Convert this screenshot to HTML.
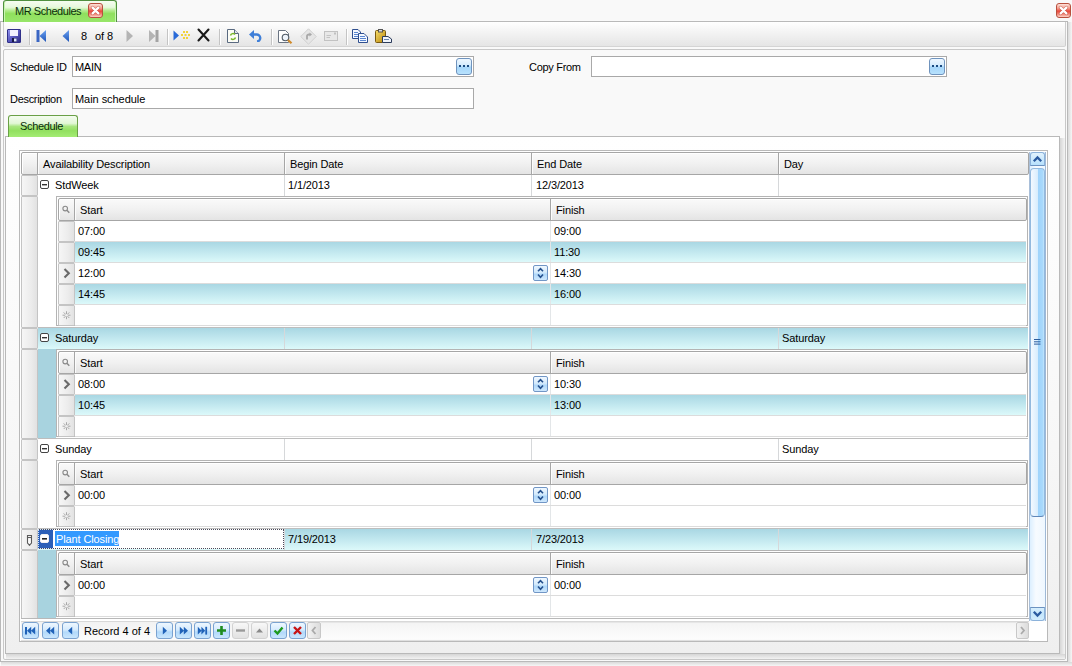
<!DOCTYPE html><html><head><meta charset="utf-8"><style>
html,body{margin:0;padding:0;}
body{width:1072px;height:666px;position:relative;overflow:hidden;background:#f9f9f9;font-family:"Liberation Sans", sans-serif;font-size:11px;}
div{position:absolute;box-sizing:border-box;}
.t{line-height:13px;white-space:nowrap;color:#000;letter-spacing:-0.3px;}
.g{letter-spacing:-0.12px;}
svg{position:absolute;}

</style></head><body>
<div style="left:0px;top:21px;width:1068px;height:641px;border:1px solid #b9b9b9;background:#f9f9f9;"></div>
<div style="left:3px;top:22px;width:1063px;height:25px;border:1px solid #cdcdcd;border-top:none;border-bottom-color:#d4d4d4;border-radius:0 0 2px 2px;background:linear-gradient(#ffffff 0%,#f4f4f4 40%,#e5e5e5 100%);"></div>
<div style="left:3px;top:0px;width:114px;height:22px;border:1px solid #4f8f3f;border-bottom:none;border-radius:3px 3px 0 0;background:linear-gradient(#f6fdf2 0%,#e6f9dc 30%,#b4ec90 45%,#8fe05d 60%,#98e66a 100%);box-shadow:inset 1px 0 0 #c8f5b0,inset -1px 0 0 #c8f5b0;"></div>
<div class="t" style="left:15px;top:5px;color:#0a2e0a;letter-spacing:-0.45px;">MR Schedules</div>
<div style="left:88px;top:3px;width:15px;height:15px;border:1px solid #b8503e;border-radius:3px;background:linear-gradient(#fde4dc 0%,#f59484 35%,#e8483c 55%,#f07c6c 75%,#fcd4c8 100%);"></div>
<svg style="left:88px;top:3px" width="15" height="15" viewBox="0 0 15 15"><path d="M4.6 4.6 L10.4 10.4 M10.4 4.6 L4.6 10.4" stroke="#9a3020" stroke-width="3.4" stroke-linecap="round" opacity="0.45"/><path d="M4.6 4.6 L10.4 10.4 M10.4 4.6 L4.6 10.4" stroke="#fff" stroke-width="2.2" stroke-linecap="round"/></svg>
<div style="left:1056px;top:3px;width:15px;height:15px;border:1px solid #b8503e;border-radius:3px;background:linear-gradient(#fde4dc 0%,#f59484 35%,#e8483c 55%,#f07c6c 75%,#fcd4c8 100%);"></div>
<svg style="left:1056px;top:3px" width="15" height="15" viewBox="0 0 15 15"><path d="M4.6 4.6 L10.4 10.4 M10.4 4.6 L4.6 10.4" stroke="#9a3020" stroke-width="3.4" stroke-linecap="round" opacity="0.45"/><path d="M4.6 4.6 L10.4 10.4 M10.4 4.6 L4.6 10.4" stroke="#fff" stroke-width="2.2" stroke-linecap="round"/></svg>
<div style="left:3px;top:49px;width:1063px;height:611px;border:1px solid #c8c8c8;border-radius:2px;background:#f9f9f9;"></div>
<div style="left:1068px;top:22px;width:4px;height:641px;background:linear-gradient(90deg,#dadada,#f6f6f6);"></div>
<div style="left:1px;top:662px;width:1071px;height:4px;background:linear-gradient(#dadada,#f6f6f6);"></div>
<div class="t" style="left:10px;top:61px;">Schedule ID</div>
<div style="left:72px;top:56px;width:402px;height:21px;border:1px solid #a9a9a9;background:#fff;"></div>
<div class="t" style="left:75px;top:61px;">MAIN</div>
<div style="left:456px;top:58px;width:16px;height:17px;border:1px solid #6f93bd;border-radius:3px;background:linear-gradient(#eef7ff 0%,#d6ecfd 40%,#a6d6fa 55%,#b8e2fd 100%);"></div>
<svg style="left:456px;top:58px" width="16" height="17"><rect x="3" y="7" width="2" height="2" fill="#1a4a80"/><rect x="7" y="7" width="2" height="2" fill="#1a4a80"/><rect x="11" y="7" width="2" height="2" fill="#1a4a80"/></svg>
<div class="t" style="left:10px;top:93px;">Description</div>
<div style="left:72px;top:88px;width:402px;height:21px;border:1px solid #a9a9a9;background:#fff;"></div>
<div class="t" style="left:75px;top:93px;letter-spacing:-0.05px;">Main schedule</div>
<div class="t" style="left:529px;top:61px;">Copy From</div>
<div style="left:591px;top:56px;width:356px;height:21px;border:1px solid #a9a9a9;background:#fff;"></div>
<div style="left:929px;top:58px;width:16px;height:17px;border:1px solid #6f93bd;border-radius:3px;background:linear-gradient(#eef7ff 0%,#d6ecfd 40%,#a6d6fa 55%,#b8e2fd 100%);"></div>
<svg style="left:929px;top:58px" width="16" height="17"><rect x="3" y="7" width="2" height="2" fill="#1a4a80"/><rect x="7" y="7" width="2" height="2" fill="#1a4a80"/><rect x="11" y="7" width="2" height="2" fill="#1a4a80"/></svg>
<div style="left:5px;top:136px;width:1055px;height:518px;border:1px solid #b9b9b9;background:linear-gradient(#ffffff 0%,#f7f7f7 60%,#efefef 100%);"></div>
<div style="left:1060px;top:138px;width:5px;height:516px;background:linear-gradient(90deg,#d6d6d6,#f4f4f4);"></div>
<div style="left:6px;top:654px;width:1059px;height:5px;background:linear-gradient(#d6d6d6,#f2f2f2);"></div>
<div style="left:8px;top:115px;width:70px;height:22px;border:1px solid #6aa046;border-bottom:none;border-radius:3px 3px 0 0;background:linear-gradient(#f4fcef 0%,#e2f7d6 35%,#a8e67f 50%,#92e05f 70%,#a4ec74 100%);"></div>
<div class="t" style="left:20px;top:120px;color:#0a2e0a;letter-spacing:-0.35px;">Schedule</div>
<div style="left:19px;top:150px;width:1029px;height:492px;border:1px solid #b9b9b9;background:#fff;"></div>
<div style="left:21px;top:152px;width:1008px;height:23px;border:1px solid #a6a6a6;border-radius:2px;background:linear-gradient(#fafafa 0%,#f1f1f1 50%,#e4e4e4 100%);box-shadow:inset 1px 1px 0 #fff;"></div>
<div style="left:37px;top:153px;width:1px;height:21px;background:#a6a6a6;"></div>
<div style="left:38px;top:153px;width:1px;height:21px;background:#fcfcfc;"></div>
<div style="left:284px;top:153px;width:1px;height:21px;background:#a6a6a6;"></div>
<div style="left:285px;top:153px;width:1px;height:21px;background:#fcfcfc;"></div>
<div style="left:531px;top:153px;width:1px;height:21px;background:#a6a6a6;"></div>
<div style="left:532px;top:153px;width:1px;height:21px;background:#fcfcfc;"></div>
<div style="left:778px;top:153px;width:1px;height:21px;background:#a6a6a6;"></div>
<div style="left:779px;top:153px;width:1px;height:21px;background:#fcfcfc;"></div>
<div class="t" style="left:43px;top:158px;letter-spacing:-0.12px;">Availability Description</div>
<div class="t" style="left:290px;top:158px;letter-spacing:-0.12px;">Begin Date</div>
<div class="t" style="left:537px;top:158px;letter-spacing:-0.12px;">End Date</div>
<div class="t" style="left:784px;top:158px;letter-spacing:-0.12px;">Day</div>
<div style="left:21px;top:175px;width:17px;height:21px;border:1px solid #c4c4c4;border-radius:1px;background:linear-gradient(90deg,#f6f6f6 0%,#ececec 60%,#e2e2e2 100%);"></div>
<div style="left:38px;top:175px;width:990px;height:21px;background:#fff;"></div>
<div style="left:284px;top:175px;width:1px;height:21px;background:#d6d8da;"></div>
<div style="left:531px;top:175px;width:1px;height:21px;background:#d6d8da;"></div>
<div style="left:778px;top:175px;width:1px;height:21px;background:#d6d8da;"></div>
<svg style="left:40px;top:180px" width="9" height="9"><rect x="0.5" y="0.5" width="8" height="8" rx="1.5" fill="#fff" stroke="#444"/><rect x="2" y="4" width="5" height="1.4" fill="#333"/></svg>
<div class="t" style="left:55px;top:179px;letter-spacing:-0.12px;">StdWeek</div>
<div class="t" style="left:288px;top:179px;letter-spacing:-0.12px;">1/1/2013</div>
<div class="t" style="left:536px;top:179px;letter-spacing:-0.12px;">12/3/2013</div>
<div class="t" style="left:782px;top:179px;letter-spacing:-0.12px;"></div>
<div style="left:21px;top:196px;width:17px;height:132px;border:1px solid #c4c4c4;border-radius:1px;background:linear-gradient(90deg,#f6f6f6 0%,#ececec 60%,#e2e2e2 100%);"></div>
<div style="left:38px;top:327px;width:990px;height:1px;background:#bdbdbd;"></div>
<div style="left:56px;top:196px;width:972px;height:130px;border:1px solid #b4b4b4;background:#fff;"></div>
<div style="left:58px;top:198px;width:969px;height:23px;border:1px solid #a6a6a6;border-radius:2px;background:linear-gradient(#fafafa 0%,#f1f1f1 50%,#e4e4e4 100%);box-shadow:inset 1px 1px 0 #fff;"></div>
<div style="left:74px;top:199px;width:1px;height:21px;background:#a6a6a6;"></div>
<div style="left:75px;top:199px;width:1px;height:21px;background:#fcfcfc;"></div>
<div style="left:550px;top:199px;width:1px;height:21px;background:#a6a6a6;"></div>
<div style="left:551px;top:199px;width:1px;height:21px;background:#fcfcfc;"></div>
<svg style="left:58px;top:198px" width="17" height="22"><circle cx="7.2" cy="10.6" r="2.3" fill="none" stroke="#8a8a8a" stroke-width="1.1"/><path d="M8.9 12.3 L11.3 14.7" stroke="#8a8a8a" stroke-width="1.5"/></svg>
<div class="t" style="left:80px;top:204px;letter-spacing:-0.12px;">Start</div>
<div class="t" style="left:556px;top:204px;letter-spacing:-0.12px;">Finish</div>
<div style="left:58px;top:221px;width:17px;height:21px;border:1px solid #c4c4c4;border-radius:1px;background:linear-gradient(90deg,#f6f6f6 0%,#ececec 60%,#e2e2e2 100%);"></div>
<div style="left:75px;top:221px;width:951px;height:20px;background:#fff;"></div>
<div style="left:550px;top:221px;width:1px;height:20px;background:#e3e6e8;"></div>
<div style="left:75px;top:241px;width:951px;height:1px;background:#dcdcdc;"></div>
<div class="t" style="left:78px;top:225px;letter-spacing:-0.12px;">07:00</div>
<div class="t" style="left:554px;top:225px;letter-spacing:-0.12px;">09:00</div>
<div style="left:58px;top:242px;width:17px;height:21px;border:1px solid #c4c4c4;border-radius:1px;background:linear-gradient(90deg,#f6f6f6 0%,#ececec 60%,#e2e2e2 100%);"></div>
<div style="left:75px;top:242px;width:951px;height:20px;background:linear-gradient(#a9d7e3 0%,#c2e8ef 50%,#dcf9fa 100%);"></div>
<div style="left:550px;top:242px;width:1px;height:20px;background:#e3e6e8;"></div>
<div style="left:75px;top:262px;width:951px;height:1px;background:#dcdcdc;"></div>
<div class="t" style="left:78px;top:246px;letter-spacing:-0.12px;">09:45</div>
<div class="t" style="left:554px;top:246px;letter-spacing:-0.12px;">11:30</div>
<div style="left:58px;top:263px;width:17px;height:21px;border:1px solid #c4c4c4;border-radius:1px;background:linear-gradient(90deg,#f6f6f6 0%,#ececec 60%,#e2e2e2 100%);"></div>
<div style="left:75px;top:263px;width:951px;height:20px;background:#fff;"></div>
<div style="left:550px;top:263px;width:1px;height:20px;background:#e3e6e8;"></div>
<div style="left:75px;top:283px;width:951px;height:1px;background:#dcdcdc;"></div>
<div class="t" style="left:78px;top:267px;letter-spacing:-0.12px;">12:00</div>
<div class="t" style="left:554px;top:267px;letter-spacing:-0.12px;">14:30</div>
<svg style="left:58px;top:263px" width="17" height="21"><path d="M6.5 6 L10.8 10.2 L6.5 14.4" fill="none" stroke="#6a6a6a" stroke-width="2.1"/></svg>
<div style="left:533px;top:265px;width:15px;height:16px;border:1px solid #7196c6;border-radius:2px;background:linear-gradient(#f0f8ff 0%,#d4eafc 45%,#b0d8fa 60%,#cfe8fd 100%);"></div>
<svg style="left:533px;top:265px" width="15" height="16"><path d="M5 6.3 L7.5 3.6 L10 6.3 M5 9.5 L7.5 12.3 L10 9.5" fill="none" stroke="#24508e" stroke-width="1.6"/></svg>
<div style="left:58px;top:284px;width:17px;height:21px;border:1px solid #c4c4c4;border-radius:1px;background:linear-gradient(90deg,#f6f6f6 0%,#ececec 60%,#e2e2e2 100%);"></div>
<div style="left:75px;top:284px;width:951px;height:20px;background:linear-gradient(#a9d7e3 0%,#c2e8ef 50%,#dcf9fa 100%);"></div>
<div style="left:550px;top:284px;width:1px;height:20px;background:#e3e6e8;"></div>
<div style="left:75px;top:304px;width:951px;height:1px;background:#dcdcdc;"></div>
<div class="t" style="left:78px;top:288px;letter-spacing:-0.12px;">14:45</div>
<div class="t" style="left:554px;top:288px;letter-spacing:-0.12px;">16:00</div>
<div style="left:58px;top:305px;width:17px;height:21px;border:1px solid #c4c4c4;border-radius:1px;background:linear-gradient(90deg,#f6f6f6 0%,#ececec 60%,#e2e2e2 100%);"></div>
<div style="left:75px;top:305px;width:951px;height:20px;background:#fff;"></div>
<div style="left:550px;top:305px;width:1px;height:20px;background:#e3e6e8;"></div>
<div style="left:75px;top:325px;width:951px;height:1px;background:#dcdcdc;"></div>
<svg style="left:58px;top:305px" width="17" height="21"><g stroke="#a0a0a0" stroke-width="0.9"><path d="M8.5 6.2 V14.2 M4.5 10.2 H12.5 M5.7 7.4 L11.3 13 M11.3 7.4 L5.7 13"/></g><circle cx="8.5" cy="10.2" r="1.3" fill="#f0f0f0"/></svg>
<div style="left:21px;top:328px;width:17px;height:21px;border:1px solid #c4c4c4;border-radius:1px;background:linear-gradient(90deg,#f6f6f6 0%,#ececec 60%,#e2e2e2 100%);"></div>
<div style="left:38px;top:328px;width:990px;height:21px;background:linear-gradient(#a9d7e3 0%,#c2e8ef 50%,#dcf9fa 100%);"></div>
<div style="left:284px;top:328px;width:1px;height:21px;background:#d6d8da;"></div>
<div style="left:531px;top:328px;width:1px;height:21px;background:#d6d8da;"></div>
<div style="left:778px;top:328px;width:1px;height:21px;background:#d6d8da;"></div>
<svg style="left:40px;top:333px" width="9" height="9"><rect x="0.5" y="0.5" width="8" height="8" rx="1.5" fill="#fff" stroke="#444"/><rect x="2" y="4" width="5" height="1.4" fill="#333"/></svg>
<div class="t" style="left:55px;top:332px;letter-spacing:-0.12px;">Saturday</div>
<div class="t" style="left:288px;top:332px;letter-spacing:-0.12px;"></div>
<div class="t" style="left:536px;top:332px;letter-spacing:-0.12px;"></div>
<div class="t" style="left:782px;top:332px;letter-spacing:-0.12px;">Saturday</div>
<div style="left:21px;top:349px;width:17px;height:90px;border:1px solid #c4c4c4;border-radius:1px;background:linear-gradient(90deg,#f6f6f6 0%,#ececec 60%,#e2e2e2 100%);"></div>
<div style="left:38px;top:349px;width:18px;height:89px;background:#a8d3df;"></div>
<div style="left:38px;top:438px;width:990px;height:1px;background:#bdbdbd;"></div>
<div style="left:56px;top:349px;width:972px;height:88px;border:1px solid #b4b4b4;background:#fff;"></div>
<div style="left:58px;top:351px;width:969px;height:23px;border:1px solid #a6a6a6;border-radius:2px;background:linear-gradient(#fafafa 0%,#f1f1f1 50%,#e4e4e4 100%);box-shadow:inset 1px 1px 0 #fff;"></div>
<div style="left:74px;top:352px;width:1px;height:21px;background:#a6a6a6;"></div>
<div style="left:75px;top:352px;width:1px;height:21px;background:#fcfcfc;"></div>
<div style="left:550px;top:352px;width:1px;height:21px;background:#a6a6a6;"></div>
<div style="left:551px;top:352px;width:1px;height:21px;background:#fcfcfc;"></div>
<svg style="left:58px;top:351px" width="17" height="22"><circle cx="7.2" cy="10.6" r="2.3" fill="none" stroke="#8a8a8a" stroke-width="1.1"/><path d="M8.9 12.3 L11.3 14.7" stroke="#8a8a8a" stroke-width="1.5"/></svg>
<div class="t" style="left:80px;top:357px;letter-spacing:-0.12px;">Start</div>
<div class="t" style="left:556px;top:357px;letter-spacing:-0.12px;">Finish</div>
<div style="left:58px;top:374px;width:17px;height:21px;border:1px solid #c4c4c4;border-radius:1px;background:linear-gradient(90deg,#f6f6f6 0%,#ececec 60%,#e2e2e2 100%);"></div>
<div style="left:75px;top:374px;width:951px;height:20px;background:#fff;"></div>
<div style="left:550px;top:374px;width:1px;height:20px;background:#e3e6e8;"></div>
<div style="left:75px;top:394px;width:951px;height:1px;background:#dcdcdc;"></div>
<div class="t" style="left:78px;top:378px;letter-spacing:-0.12px;">08:00</div>
<div class="t" style="left:554px;top:378px;letter-spacing:-0.12px;">10:30</div>
<svg style="left:58px;top:374px" width="17" height="21"><path d="M6.5 6 L10.8 10.2 L6.5 14.4" fill="none" stroke="#6a6a6a" stroke-width="2.1"/></svg>
<div style="left:533px;top:376px;width:15px;height:16px;border:1px solid #7196c6;border-radius:2px;background:linear-gradient(#f0f8ff 0%,#d4eafc 45%,#b0d8fa 60%,#cfe8fd 100%);"></div>
<svg style="left:533px;top:376px" width="15" height="16"><path d="M5 6.3 L7.5 3.6 L10 6.3 M5 9.5 L7.5 12.3 L10 9.5" fill="none" stroke="#24508e" stroke-width="1.6"/></svg>
<div style="left:58px;top:395px;width:17px;height:21px;border:1px solid #c4c4c4;border-radius:1px;background:linear-gradient(90deg,#f6f6f6 0%,#ececec 60%,#e2e2e2 100%);"></div>
<div style="left:75px;top:395px;width:951px;height:20px;background:linear-gradient(#a9d7e3 0%,#c2e8ef 50%,#dcf9fa 100%);"></div>
<div style="left:550px;top:395px;width:1px;height:20px;background:#e3e6e8;"></div>
<div style="left:75px;top:415px;width:951px;height:1px;background:#dcdcdc;"></div>
<div class="t" style="left:78px;top:399px;letter-spacing:-0.12px;">10:45</div>
<div class="t" style="left:554px;top:399px;letter-spacing:-0.12px;">13:00</div>
<div style="left:58px;top:416px;width:17px;height:21px;border:1px solid #c4c4c4;border-radius:1px;background:linear-gradient(90deg,#f6f6f6 0%,#ececec 60%,#e2e2e2 100%);"></div>
<div style="left:75px;top:416px;width:951px;height:20px;background:#fff;"></div>
<div style="left:550px;top:416px;width:1px;height:20px;background:#e3e6e8;"></div>
<div style="left:75px;top:436px;width:951px;height:1px;background:#dcdcdc;"></div>
<svg style="left:58px;top:416px" width="17" height="21"><g stroke="#a0a0a0" stroke-width="0.9"><path d="M8.5 6.2 V14.2 M4.5 10.2 H12.5 M5.7 7.4 L11.3 13 M11.3 7.4 L5.7 13"/></g><circle cx="8.5" cy="10.2" r="1.3" fill="#f0f0f0"/></svg>
<div style="left:21px;top:439px;width:17px;height:21px;border:1px solid #c4c4c4;border-radius:1px;background:linear-gradient(90deg,#f6f6f6 0%,#ececec 60%,#e2e2e2 100%);"></div>
<div style="left:38px;top:439px;width:990px;height:21px;background:#fff;"></div>
<div style="left:284px;top:439px;width:1px;height:21px;background:#d6d8da;"></div>
<div style="left:531px;top:439px;width:1px;height:21px;background:#d6d8da;"></div>
<div style="left:778px;top:439px;width:1px;height:21px;background:#d6d8da;"></div>
<svg style="left:40px;top:444px" width="9" height="9"><rect x="0.5" y="0.5" width="8" height="8" rx="1.5" fill="#fff" stroke="#444"/><rect x="2" y="4" width="5" height="1.4" fill="#333"/></svg>
<div class="t" style="left:55px;top:443px;letter-spacing:-0.12px;">Sunday</div>
<div class="t" style="left:288px;top:443px;letter-spacing:-0.12px;"></div>
<div class="t" style="left:536px;top:443px;letter-spacing:-0.12px;"></div>
<div class="t" style="left:782px;top:443px;letter-spacing:-0.12px;">Sunday</div>
<div style="left:21px;top:460px;width:17px;height:69px;border:1px solid #c4c4c4;border-radius:1px;background:linear-gradient(90deg,#f6f6f6 0%,#ececec 60%,#e2e2e2 100%);"></div>
<div style="left:38px;top:528px;width:990px;height:1px;background:#bdbdbd;"></div>
<div style="left:56px;top:460px;width:972px;height:67px;border:1px solid #b4b4b4;background:#fff;"></div>
<div style="left:58px;top:462px;width:969px;height:23px;border:1px solid #a6a6a6;border-radius:2px;background:linear-gradient(#fafafa 0%,#f1f1f1 50%,#e4e4e4 100%);box-shadow:inset 1px 1px 0 #fff;"></div>
<div style="left:74px;top:463px;width:1px;height:21px;background:#a6a6a6;"></div>
<div style="left:75px;top:463px;width:1px;height:21px;background:#fcfcfc;"></div>
<div style="left:550px;top:463px;width:1px;height:21px;background:#a6a6a6;"></div>
<div style="left:551px;top:463px;width:1px;height:21px;background:#fcfcfc;"></div>
<svg style="left:58px;top:462px" width="17" height="22"><circle cx="7.2" cy="10.6" r="2.3" fill="none" stroke="#8a8a8a" stroke-width="1.1"/><path d="M8.9 12.3 L11.3 14.7" stroke="#8a8a8a" stroke-width="1.5"/></svg>
<div class="t" style="left:80px;top:468px;letter-spacing:-0.12px;">Start</div>
<div class="t" style="left:556px;top:468px;letter-spacing:-0.12px;">Finish</div>
<div style="left:58px;top:485px;width:17px;height:21px;border:1px solid #c4c4c4;border-radius:1px;background:linear-gradient(90deg,#f6f6f6 0%,#ececec 60%,#e2e2e2 100%);"></div>
<div style="left:75px;top:485px;width:951px;height:20px;background:#fff;"></div>
<div style="left:550px;top:485px;width:1px;height:20px;background:#e3e6e8;"></div>
<div style="left:75px;top:505px;width:951px;height:1px;background:#dcdcdc;"></div>
<div class="t" style="left:78px;top:489px;letter-spacing:-0.12px;">00:00</div>
<div class="t" style="left:554px;top:489px;letter-spacing:-0.12px;">00:00</div>
<svg style="left:58px;top:485px" width="17" height="21"><path d="M6.5 6 L10.8 10.2 L6.5 14.4" fill="none" stroke="#6a6a6a" stroke-width="2.1"/></svg>
<div style="left:533px;top:487px;width:15px;height:16px;border:1px solid #7196c6;border-radius:2px;background:linear-gradient(#f0f8ff 0%,#d4eafc 45%,#b0d8fa 60%,#cfe8fd 100%);"></div>
<svg style="left:533px;top:487px" width="15" height="16"><path d="M5 6.3 L7.5 3.6 L10 6.3 M5 9.5 L7.5 12.3 L10 9.5" fill="none" stroke="#24508e" stroke-width="1.6"/></svg>
<div style="left:58px;top:506px;width:17px;height:21px;border:1px solid #c4c4c4;border-radius:1px;background:linear-gradient(90deg,#f6f6f6 0%,#ececec 60%,#e2e2e2 100%);"></div>
<div style="left:75px;top:506px;width:951px;height:20px;background:#fff;"></div>
<div style="left:550px;top:506px;width:1px;height:20px;background:#e3e6e8;"></div>
<div style="left:75px;top:526px;width:951px;height:1px;background:#dcdcdc;"></div>
<svg style="left:58px;top:506px" width="17" height="21"><g stroke="#a0a0a0" stroke-width="0.9"><path d="M8.5 6.2 V14.2 M4.5 10.2 H12.5 M5.7 7.4 L11.3 13 M11.3 7.4 L5.7 13"/></g><circle cx="8.5" cy="10.2" r="1.3" fill="#f0f0f0"/></svg>
<div style="left:21px;top:529px;width:17px;height:21px;border:1px solid #c4c4c4;border-radius:1px;background:linear-gradient(90deg,#f6f6f6 0%,#ececec 60%,#e2e2e2 100%);"></div>
<svg style="left:21px;top:529px" width="17" height="21"><path d="M6.5 6.5 H10.5 V14 L8.5 16.2 L6.5 14 Z" fill="#fafafa" stroke="#5a5a5a" stroke-width="1.1"/><path d="M6.5 8.5 H10.5" stroke="#5a5a5a" stroke-width="1.1"/><path d="M8.5 15 V16.5" stroke="#5a5a5a" stroke-width="1.2"/></svg>
<div style="left:38px;top:529px;width:990px;height:21px;background:linear-gradient(#a9d7e3 0%,#c2e8ef 50%,#dcf9fa 100%);"></div>
<div style="left:284px;top:529px;width:1px;height:21px;background:#d6d8da;"></div>
<div style="left:531px;top:529px;width:1px;height:21px;background:#d6d8da;"></div>
<div style="left:778px;top:529px;width:1px;height:21px;background:#d6d8da;"></div>
<div style="left:38px;top:529px;width:15px;height:20px;background:#2b5fb8;"></div>
<svg style="left:40px;top:534px" width="9" height="9"><rect x="0.5" y="0.5" width="8" height="8" rx="1.5" fill="#fff" stroke="#f0f0f0"/><rect x="2" y="4" width="5" height="1.6" fill="#222"/></svg>
<div style="left:53px;top:529px;width:231px;height:20px;background:#fff;"></div>
<div style="left:38px;top:529px;width:246px;height:20px;border:1px dotted #4a4a5a;"></div>
<div style="left:38px;top:529px;width:15px;height:20px;border:1px dotted #cfe6ff;border-right:none;"></div>
<div style="left:55px;top:531px;width:64px;height:15px;background:#3399ff;"></div>
<div class="t" style="left:56px;top:533px;color:#fff;letter-spacing:-0.12px;">Plant Closing</div>
<div class="t" style="left:288px;top:533px;letter-spacing:-0.12px;">7/19/2013</div>
<div class="t" style="left:536px;top:533px;letter-spacing:-0.12px;">7/23/2013</div>
<div class="t" style="left:782px;top:533px;letter-spacing:-0.12px;"></div>
<div style="left:21px;top:550px;width:17px;height:69px;border:1px solid #c4c4c4;border-radius:1px;background:linear-gradient(90deg,#f6f6f6 0%,#ececec 60%,#e2e2e2 100%);"></div>
<div style="left:38px;top:550px;width:18px;height:68px;background:#a8d3df;"></div>
<div style="left:38px;top:618px;width:990px;height:1px;background:#bdbdbd;"></div>
<div style="left:56px;top:550px;width:972px;height:67px;border:1px solid #b4b4b4;background:#fff;"></div>
<div style="left:58px;top:552px;width:969px;height:23px;border:1px solid #a6a6a6;border-radius:2px;background:linear-gradient(#fafafa 0%,#f1f1f1 50%,#e4e4e4 100%);box-shadow:inset 1px 1px 0 #fff;"></div>
<div style="left:74px;top:553px;width:1px;height:21px;background:#a6a6a6;"></div>
<div style="left:75px;top:553px;width:1px;height:21px;background:#fcfcfc;"></div>
<div style="left:550px;top:553px;width:1px;height:21px;background:#a6a6a6;"></div>
<div style="left:551px;top:553px;width:1px;height:21px;background:#fcfcfc;"></div>
<svg style="left:58px;top:552px" width="17" height="22"><circle cx="7.2" cy="10.6" r="2.3" fill="none" stroke="#8a8a8a" stroke-width="1.1"/><path d="M8.9 12.3 L11.3 14.7" stroke="#8a8a8a" stroke-width="1.5"/></svg>
<div class="t" style="left:80px;top:558px;letter-spacing:-0.12px;">Start</div>
<div class="t" style="left:556px;top:558px;letter-spacing:-0.12px;">Finish</div>
<div style="left:58px;top:575px;width:17px;height:21px;border:1px solid #c4c4c4;border-radius:1px;background:linear-gradient(90deg,#f6f6f6 0%,#ececec 60%,#e2e2e2 100%);"></div>
<div style="left:75px;top:575px;width:951px;height:20px;background:#fff;"></div>
<div style="left:550px;top:575px;width:1px;height:20px;background:#e3e6e8;"></div>
<div style="left:75px;top:595px;width:951px;height:1px;background:#dcdcdc;"></div>
<div class="t" style="left:78px;top:579px;letter-spacing:-0.12px;">00:00</div>
<div class="t" style="left:554px;top:579px;letter-spacing:-0.12px;">00:00</div>
<svg style="left:58px;top:575px" width="17" height="21"><path d="M6.5 6 L10.8 10.2 L6.5 14.4" fill="none" stroke="#6a6a6a" stroke-width="2.1"/></svg>
<div style="left:533px;top:577px;width:15px;height:16px;border:1px solid #7196c6;border-radius:2px;background:linear-gradient(#f0f8ff 0%,#d4eafc 45%,#b0d8fa 60%,#cfe8fd 100%);"></div>
<svg style="left:533px;top:577px" width="15" height="16"><path d="M5 6.3 L7.5 3.6 L10 6.3 M5 9.5 L7.5 12.3 L10 9.5" fill="none" stroke="#24508e" stroke-width="1.6"/></svg>
<div style="left:58px;top:596px;width:17px;height:21px;border:1px solid #c4c4c4;border-radius:1px;background:linear-gradient(90deg,#f6f6f6 0%,#ececec 60%,#e2e2e2 100%);"></div>
<div style="left:75px;top:596px;width:951px;height:20px;background:#fff;"></div>
<div style="left:550px;top:596px;width:1px;height:20px;background:#e3e6e8;"></div>
<div style="left:75px;top:616px;width:951px;height:1px;background:#dcdcdc;"></div>
<svg style="left:58px;top:596px" width="17" height="21"><g stroke="#a0a0a0" stroke-width="0.9"><path d="M8.5 6.2 V14.2 M4.5 10.2 H12.5 M5.7 7.4 L11.3 13 M11.3 7.4 L5.7 13"/></g><circle cx="8.5" cy="10.2" r="1.3" fill="#f0f0f0"/></svg>
<div style="left:1029px;top:152px;width:17px;height:469px;border-left:1px solid #a9bfd9;border-right:1px solid #9fb9d6;background:linear-gradient(90deg,#dcefff 0%,#f7fbff 40%,#eef7ff 100%);"></div>
<div style="left:1030px;top:152px;width:15px;height:14px;border:1px solid #8cb2da;border-bottom-color:#6c92c0;border-radius:3px 3px 0 0;background:linear-gradient(#e2f3fe 0%,#cbe9fd 55%,#b6e0fc 100%);"></div>
<svg style="left:1030px;top:152px" width="15" height="14"><path d="M3.8 9.2 L7.5 5.5 L11.2 9.2" fill="none" stroke="#2a5aa0" stroke-width="2.3"/></svg>
<div style="left:1030px;top:168px;width:15px;height:349px;border:1px solid #93b9de;border-bottom-color:#5f86b8;border-radius:4px;background:linear-gradient(90deg,#f4f9ff 0%,#d9edfd 50%,#9fd3fb 54%,#a8d9fc 88%,#c4e6fd 100%);"></div>
<svg style="left:1030px;top:336px" width="15" height="12"><path d="M4 3.5 H10.5 M4 5.8 H10.5 M4 8.1 H10.5" stroke="#2d5d9e" stroke-width="1"/></svg>
<div style="left:1030px;top:607px;width:15px;height:14px;border:1px solid #8cb2da;border-top-color:#6c92c0;border-radius:0 0 3px 3px;background:linear-gradient(#d6eefd 0%,#c4e6fc 50%,#d2ecfd 100%);"></div>
<svg style="left:1030px;top:607px" width="15" height="14"><path d="M3.8 4.8 L7.5 8.5 L11.2 4.8" fill="none" stroke="#2a5aa0" stroke-width="2.3"/></svg>
<div style="left:21px;top:618px;width:1008px;height:1px;background:#b8b8b8;"></div>
<div style="left:21px;top:621px;width:1008px;height:20px;border-top:1px solid #d8d8d8;border-bottom:1px solid #e0e0e0;background:linear-gradient(#f2f2f2 0%,#f7f7f7 50%,#fbfbfb 100%);"></div>
<div style="left:22px;top:622px;width:17px;height:17px;border:1px solid #7aa2d0;border-radius:3px;background:linear-gradient(#eef7ff 0%,#d6ebfd 45%,#b2d9fa 60%,#c9e6fd 100%);"></div>
<svg style="left:22px;top:622px" width="17" height="17"><path d="M4 5 V12.5" stroke="#2062b8" stroke-width="2"/><path d="M5 8.7 L9.2 4.8 V12.6 Z M9 8.7 L13.2 4.8 V12.6 Z" fill="#2062b8"/></svg>
<div style="left:42px;top:622px;width:17px;height:17px;border:1px solid #7aa2d0;border-radius:3px;background:linear-gradient(#eef7ff 0%,#d6ebfd 45%,#b2d9fa 60%,#c9e6fd 100%);"></div>
<svg style="left:42px;top:622px" width="17" height="17"><path d="M4 8.7 L8.2 4.8 V12.6 Z M8 8.7 L12.2 4.8 V12.6 Z" fill="#2062b8"/></svg>
<div style="left:62px;top:622px;width:17px;height:17px;border:1px solid #7aa2d0;border-radius:3px;background:linear-gradient(#eef7ff 0%,#d6ebfd 45%,#b2d9fa 60%,#c9e6fd 100%);"></div>
<svg style="left:62px;top:622px" width="17" height="17"><path d="M6 8.7 L10.2 4.8 V12.6 Z" fill="#2062b8"/></svg>
<div class="t" style="left:84px;top:625px;letter-spacing:0px;">Record 4 of 4</div>
<div style="left:156px;top:622px;width:17px;height:17px;border:1px solid #7aa2d0;border-radius:3px;background:linear-gradient(#eef7ff 0%,#d6ebfd 45%,#b2d9fa 60%,#c9e6fd 100%);"></div>
<svg style="left:156px;top:622px" width="17" height="17"><path d="M6.8 4.8 L11 8.7 L6.8 12.6 Z" fill="#2062b8"/></svg>
<div style="left:175px;top:622px;width:17px;height:17px;border:1px solid #7aa2d0;border-radius:3px;background:linear-gradient(#eef7ff 0%,#d6ebfd 45%,#b2d9fa 60%,#c9e6fd 100%);"></div>
<svg style="left:175px;top:622px" width="17" height="17"><path d="M4.8 4.8 L9 8.7 L4.8 12.6 Z M8.8 4.8 L13 8.7 L8.8 12.6 Z" fill="#2062b8"/></svg>
<div style="left:194px;top:622px;width:17px;height:17px;border:1px solid #7aa2d0;border-radius:3px;background:linear-gradient(#eef7ff 0%,#d6ebfd 45%,#b2d9fa 60%,#c9e6fd 100%);"></div>
<svg style="left:194px;top:622px" width="17" height="17"><path d="M3.8 4.8 L7.6 8.7 L3.8 12.6 Z M7.4 4.8 L11.2 8.7 L7.4 12.6 Z" fill="#2062b8"/><path d="M12.2 4.8 V12.6" stroke="#2062b8" stroke-width="1.8"/></svg>
<div style="left:213px;top:622px;width:17px;height:17px;border:1px solid #7aa2d0;border-radius:3px;background:linear-gradient(#eef7ff 0%,#d6ebfd 45%,#b2d9fa 60%,#c9e6fd 100%);"></div>
<svg style="left:213px;top:622px" width="17" height="17"><path d="M8.5 4 V13 M4 8.5 H13" stroke="#1f8c1f" stroke-width="2.6"/></svg>
<div style="left:232px;top:622px;width:17px;height:17px;border:1px solid #d2d2d2;border-radius:3px;background:linear-gradient(#f8f8f8 0%,#ececec 50%,#e2e2e2 100%);"></div>
<svg style="left:232px;top:622px" width="17" height="17"><path d="M4 8.5 H13" stroke="#9a9a9a" stroke-width="2.4"/></svg>
<div style="left:251px;top:622px;width:17px;height:17px;border:1px solid #d2d2d2;border-radius:3px;background:linear-gradient(#f8f8f8 0%,#ececec 50%,#e2e2e2 100%);"></div>
<svg style="left:251px;top:622px" width="17" height="17"><path d="M5 10.5 L8.5 6.5 L12 10.5 Z" fill="#8a8a8a"/></svg>
<div style="left:270px;top:622px;width:17px;height:17px;border:1px solid #7aa2d0;border-radius:3px;background:linear-gradient(#eef7ff 0%,#d6ebfd 45%,#b2d9fa 60%,#c9e6fd 100%);"></div>
<svg style="left:270px;top:622px" width="17" height="17"><path d="M4.5 8.5 L7.5 11.5 L12.5 5.5" fill="none" stroke="#1e9a1e" stroke-width="2.4"/></svg>
<div style="left:289px;top:622px;width:17px;height:17px;border:1px solid #7aa2d0;border-radius:3px;background:linear-gradient(#eef7ff 0%,#d6ebfd 45%,#b2d9fa 60%,#c9e6fd 100%);"></div>
<svg style="left:289px;top:622px" width="17" height="17"><path d="M5 5 L12 12 M12 5 L5 12" stroke="#c81414" stroke-width="2.4"/></svg>
<div style="left:307px;top:622px;width:14px;height:17px;border:1px solid #c8c8c8;border-radius:2px;background:linear-gradient(90deg,#f2f2f2,#dcdcdc);"></div>
<svg style="left:307px;top:622px" width="14" height="17"><path d="M8.5 5 L5.5 8.5 L8.5 12" fill="none" stroke="#aaa" stroke-width="1.8"/></svg>
<div style="left:321px;top:622px;width:695px;height:17px;background:linear-gradient(#f4f4f4,#fdfdfd);border-top:1px solid #e6e6e6;"></div>
<div style="left:1016px;top:622px;width:13px;height:17px;border:1px solid #c8c8c8;border-radius:2px;background:linear-gradient(90deg,#f2f2f2,#dcdcdc);"></div>
<svg style="left:1016px;top:622px" width="13" height="17"><path d="M5 5 L8 8.5 L5 12" fill="none" stroke="#aaa" stroke-width="1.8"/></svg>
<svg style="left:0;top:0;width:0;height:0"><defs><linearGradient id="gFl" x1="0" y1="0" x2="1" y2="1"><stop offset="0" stop-color="#9a9af2"/><stop offset="0.5" stop-color="#5a5ac0"/><stop offset="1" stop-color="#2a2a80"/></linearGradient><linearGradient id="gBl" x1="0" y1="0" x2="0" y2="1"><stop offset="0" stop-color="#6aa0f0"/><stop offset="1" stop-color="#1f55b8"/></linearGradient><linearGradient id="gPa" x1="0" y1="0" x2="1" y2="1"><stop offset="0" stop-color="#f7dd6a"/><stop offset="1" stop-color="#b8860b"/></linearGradient></defs></svg>
<svg style="left:7px;top:29px" width="14" height="14"><rect x="0.5" y="0.5" width="13" height="13" rx="0.5" fill="url(#gFl)" stroke="#30308a"/><rect x="3" y="1" width="8" height="6" fill="#f2f2ff"/><rect x="5" y="9" width="4.5" height="4" fill="#181848"/><rect x="7" y="9.5" width="2.5" height="3" fill="#dde8ff"/></svg>
<div style="left:29px;top:29px;width:2px;height:16px;background:#c4c4c4;border-right:1px solid #fff;"></div>
<svg style="left:36px;top:30px" width="11" height="13"><rect x="0.5" y="0" width="3" height="12" fill="#3a66c4"/><path d="M3.5 6 L10 0 V12 Z" fill="url(#gBl)"/></svg>
<svg style="left:62px;top:30px" width="8" height="13"><path d="M0.5 6 L7 0 V12 Z" fill="url(#gBl)"/></svg>
<div class="t" style="left:81px;top:30px;letter-spacing:0;">8</div>
<div class="t" style="left:95px;top:30px;letter-spacing:-0.1px;">of 8</div>
<svg style="left:126px;top:30px" width="8" height="13"><path d="M0.5 0 L7 6 L0.5 12 Z" fill="#b4b4b4"/></svg>
<svg style="left:149px;top:30px" width="10" height="13"><path d="M0 0 L6.5 6 L0 12 Z" fill="#b4b4b4"/><rect x="6.5" y="0" width="3" height="12" fill="#a4a4a4"/></svg>
<div style="left:167px;top:29px;width:2px;height:16px;background:#c4c4c4;border-right:1px solid #fff;"></div>
<svg style="left:173px;top:30px" width="17" height="12"><path d="M0.5 0.5 L6 5.5 L0.5 10.5 Z" fill="#2a6ad8"/><g fill="#f2d23a"><rect x="10" y="1" width="2" height="2"/><rect x="13" y="1" width="2" height="2"/><rect x="8" y="4" width="2" height="2"/><rect x="15" y="4" width="2" height="2"/><rect x="10" y="7" width="2" height="2"/><rect x="13" y="7" width="2" height="2"/><rect x="11.5" y="4" width="2" height="2"/></g></svg>
<svg style="left:197px;top:28px" width="13" height="14"><path d="M1.5 1.5 L11.5 12.5 M11.5 1.5 L1.5 12.5" stroke="#1a1a1a" stroke-width="2.1" stroke-linecap="round"/></svg>
<div style="left:219px;top:29px;width:2px;height:16px;background:#c4c4c4;border-right:1px solid #fff;"></div>
<svg style="left:227px;top:29px" width="12" height="14"><path d="M0.5 0.5 H7.5 L11.5 4.5 V13.5 H0.5 Z" fill="#fdfdf6" stroke="#5a6a80"/><path d="M7.5 0.5 V4.5 H11.5" fill="#e0e4ea" stroke="#5a6a80"/><path d="M3.5 6.5 A2.6 2.6 0 0 1 8 5.5 M8.5 8.5 A2.6 2.6 0 0 1 4 9.5" fill="none" stroke="#7ab82a" stroke-width="1.5"/></svg>
<svg style="left:249px;top:30px" width="13" height="12"><path d="M3.5 4.5 H7.5 A3.5 3.5 0 0 1 8 11.5" fill="none" stroke="#3f7fd8" stroke-width="2.4"/><path d="M0 4.5 L5 0 V9 Z" fill="#3f7fd8"/></svg>
<div style="left:271px;top:29px;width:2px;height:16px;background:#c4c4c4;border-right:1px solid #fff;"></div>
<svg style="left:278px;top:30px" width="16" height="14"><path d="M0.5 0.5 H7.5 L10.5 3.5 V12.5 H0.5 Z" fill="#fff" stroke="#6a7482"/><circle cx="7.5" cy="7.5" r="3.3" fill="#eef4fb" stroke="#505a66" stroke-width="1.1"/><path d="M10 10 L13.5 13.2" stroke="#d08a2a" stroke-width="2.2"/></svg>
<svg style="left:300px;top:28px" width="17" height="17"><path d="M8.5 0.8 L16.2 8.5 L8.5 16.2 L0.8 8.5 Z" fill="#e6e6e6" stroke="#cfcfcf"/><path d="M7 11.5 V8 Q7 6.5 9 6.5 H10" fill="none" stroke="#a8a8a8" stroke-width="1.8"/><path d="M9.5 4.5 L12 6.5 L9.5 8.5 Z" fill="#a8a8a8"/></svg>
<svg style="left:324px;top:31px" width="14" height="10"><rect x="0.5" y="0.5" width="13" height="9" fill="#e8e8e8" stroke="#c2c2c2"/><path d="M2.5 4.5 H7 M2.5 6.5 H6" stroke="#c4c4c4"/><rect x="10" y="1.5" width="2" height="2" fill="#c0c0c0"/></svg>
<div style="left:346px;top:29px;width:2px;height:16px;background:#c4c4c4;border-right:1px solid #fff;"></div>
<svg style="left:352px;top:29px" width="16" height="14"><path d="M0.5 0.5 H6 L8.5 3 V9.5 H0.5 Z" fill="#f4f8ff" stroke="#2f4f8f"/><path d="M2 3.5 H6 M2 5.5 H6 M2 7.5 H6" stroke="#5a86d0"/><path d="M6.5 4.5 H12 L15.5 8 V13.5 H6.5 Z" fill="#f4f8ff" stroke="#2f4f8f"/><path d="M8 7.5 H13 M8 9.5 H14 M8 11.5 H14" stroke="#5a86d0"/></svg>
<svg style="left:375px;top:29px" width="17" height="14"><rect x="0.5" y="1.5" width="10" height="12" rx="1" fill="url(#gPa)" stroke="#7a5a10"/><rect x="3.5" y="0.5" width="4" height="2.5" fill="#ddd" stroke="#555"/><path d="M7.5 7.5 H13 L16.5 10 V13.5 H7.5 Z" fill="#f0f4fa" stroke="#2c3c5c"/><path d="M9 10.5 H14" stroke="#6a86b0"/></svg>
</body></html>
